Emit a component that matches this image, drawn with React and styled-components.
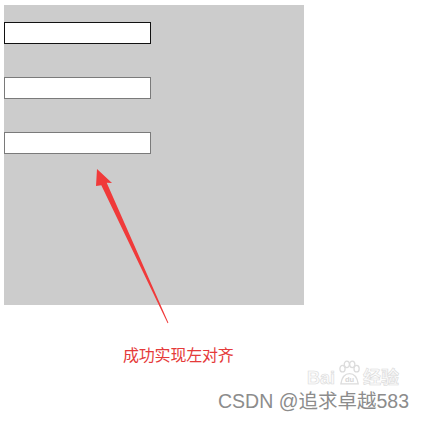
import React from 'react';
import styled, { createGlobalStyle } from 'styled-components';

const GlobalStyle = createGlobalStyle`
  html, body {
    margin: 0;
    padding: 0;
    background: #fff;
  }
  body {
    font-family: 'Liberation Sans', 'Noto Sans CJK SC', sans-serif;
  }
`;

const Page = styled.div`
  position: relative;
  width: 424px;
  height: 422px;
  padding: 5px 0 0 4px;
  box-sizing: border-box;
  overflow: hidden;
`;

const Panel = styled.div`
  width: 300px;
  height: 300px;
  background: #cccccc;
  display: flex;
  flex-direction: column;
  gap: 33px;
  padding-top: 17px;
  box-sizing: border-box;
`;

const Field = styled.input`
  width: 147px;
  height: 22px;
  box-sizing: border-box;
  margin: 0;
  padding: 0 4px;
  background: #fff;
  border: 1px solid ${p => (p.$active ? '#111' : '#7a7a7a')};
  outline: none;
  font-size: 13px;
`;

const Caption = styled.div`
  margin: 41px 0 0 119px;
  height: 16px;
  line-height: 16px;
  font-size: 16px;
  color: #e53a3a;
  font-family: 'Noto Sans CJK SC', sans-serif;
  letter-spacing: -0.2px;
`;

const Footer = styled.div`
  position: relative;
  display: flex;
  justify-content: flex-end;
  margin-top: 29px;
  padding-right: 15px;
`;

const Credit = styled.span`
  font-size: 19.5px;
  line-height: 20px;
  color: #8c8c8c;
  font-family: 'Liberation Sans', 'Noto Sans CJK SC', sans-serif;
`;

const Stamp = styled.div`
  position: absolute;
  left: 303px;
  top: -31px;
  display: flex;
  align-items: flex-end;
  gap: 2px;
  font-size: 18px;
  line-height: 18px;
  font-weight: 700;
  font-family: 'Liberation Sans', 'Noto Sans CJK SC', sans-serif;
  -webkit-text-stroke: 0.6px #dadada;
  color: #fafafa;
`;

const Overlay = styled.svg`
  position: absolute;
  left: 0;
  top: 0;
  pointer-events: none;
`;

const Pointer = () => (
  <Overlay width="424" height="422" viewBox="0 0 424 422">
    <path
      d="M97 169 L112 183 L106.7 182.8 L168.4 322.8 L167.6 323.2 L101.3 185.3 L96 186 Z"
      fill="#f03a3a"
    />
  </Overlay>
);

const Paw = () => (
  <svg width="24" height="26" viewBox="0 0 22 24" style={{ marginBottom: 1 }}>
    <g fill="none" stroke="#dcdcdc" strokeWidth="1.2">
      <ellipse cx="5" cy="8" rx="2.4" ry="3" />
      <ellipse cx="9" cy="4" rx="2.4" ry="3" />
      <ellipse cx="14" cy="4" rx="2.4" ry="3" />
      <ellipse cx="18" cy="8" rx="2.4" ry="3" />
      <path d="M3.5 22 Q5 12.5 11.5 12.5 Q18 12.5 19.5 22 Z" />
    </g>
    <text x="11.5" y="20.5" textAnchor="middle" fontSize="7" fill="#d6d6d6" fontFamily="Liberation Sans">du</text>
  </svg>
);

const App = () => (
  <>
    <GlobalStyle />
    <Page>
      <Panel>
        <Field $active />
        <Field />
        <Field />
      </Panel>
      <Caption>成功实现左对齐</Caption>
      <Footer>
        <Stamp>
          <span>Bai</span>
          <Paw />
          <span>经验</span>
        </Stamp>
        <Credit>CSDN @追求卓越583</Credit>
      </Footer>
      <Pointer />
    </Page>
  </>
);

export default App;
